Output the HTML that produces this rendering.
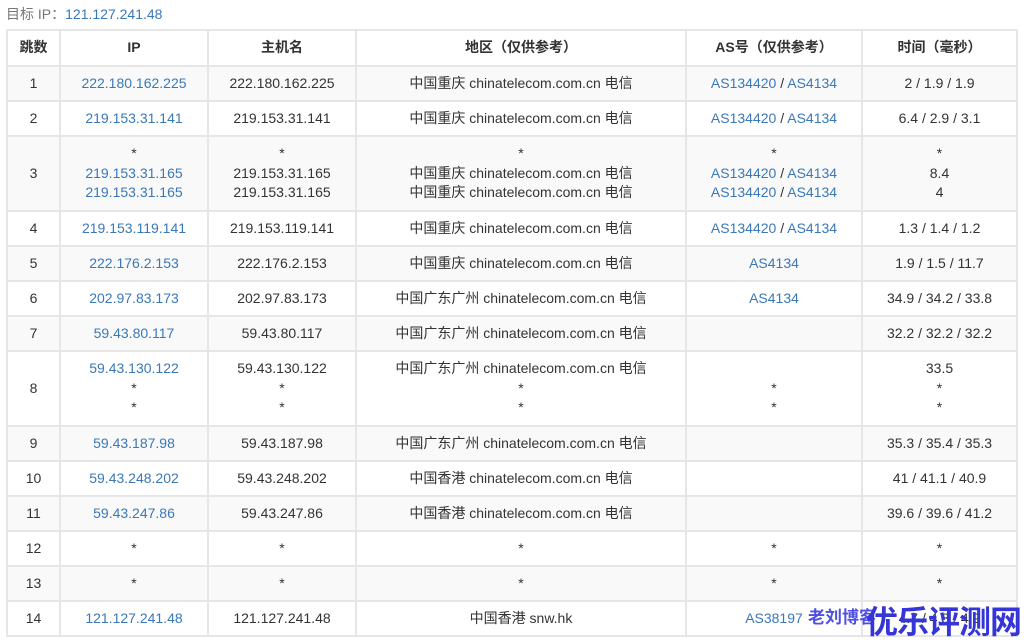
<!DOCTYPE html><html><head><meta charset="utf-8"><style>
body{margin:0;background:#fff;font-family:"Liberation Sans","Noto Sans CJK SC",sans-serif;font-size:14px;color:#333;}
.t{position:absolute;left:6px;top:4px;color:#777;font-size:14px}
.t a{color:#3a78b8}
table{position:absolute;left:6px;top:29px;border-collapse:collapse;table-layout:fixed;width:1010px}
td,th{border:2px solid #e6e6e6;text-align:center;vertical-align:middle;padding:0;line-height:19.5px}
th{font-weight:bold;height:34px}
tbody tr:nth-child(odd){background:#f9f9f9}
tr.s td{height:33px}
tr.m td{height:73px}
a{color:#3a78b8;text-decoration:none}
.wm1{position:absolute;left:808px;top:603px;color:#3c3ce0;font-weight:bold;font-size:17px;opacity:.9}
.wm2{position:absolute;left:866px;top:597px;color:#3535d8;font-weight:bold;font-size:32px;letter-spacing:-1px}
</style></head><body>
<div class="t">目标 IP：<a>121.127.241.48</a></div>
<table>
<colgroup><col style="width:53px"><col style="width:148px"><col style="width:148px"><col style="width:330px"><col style="width:176px"><col style="width:155px"></colgroup>
<thead><tr><th>跳数</th><th>IP</th><th>主机名</th><th>地区（仅供参考）</th><th>AS号（仅供参考）</th><th>时间（毫秒）</th></tr></thead>
<tbody>
<tr class="s"><td>1</td><td><a>222.180.162.225</a></td><td>222.180.162.225</td><td>中国重庆 chinatelecom.com.cn 电信</td><td><a>AS134420</a> / <a>AS4134</a></td><td>2 / 1.9 / 1.9</td></tr>
<tr class="s"><td>2</td><td><a>219.153.31.141</a></td><td>219.153.31.141</td><td>中国重庆 chinatelecom.com.cn 电信</td><td><a>AS134420</a> / <a>AS4134</a></td><td>6.4 / 2.9 / 3.1</td></tr>
<tr class="m"><td>3</td><td>*<br><a>219.153.31.165</a><br><a>219.153.31.165</a></td><td>*<br>219.153.31.165<br>219.153.31.165</td><td>*<br>中国重庆 chinatelecom.com.cn 电信<br>中国重庆 chinatelecom.com.cn 电信</td><td>*<br><a>AS134420</a> / <a>AS4134</a><br><a>AS134420</a> / <a>AS4134</a></td><td>*<br>8.4<br>4</td></tr>
<tr class="s"><td>4</td><td><a>219.153.119.141</a></td><td>219.153.119.141</td><td>中国重庆 chinatelecom.com.cn 电信</td><td><a>AS134420</a> / <a>AS4134</a></td><td>1.3 / 1.4 / 1.2</td></tr>
<tr class="s"><td>5</td><td><a>222.176.2.153</a></td><td>222.176.2.153</td><td>中国重庆 chinatelecom.com.cn 电信</td><td><a>AS4134</a></td><td>1.9 / 1.5 / 11.7</td></tr>
<tr class="s"><td>6</td><td><a>202.97.83.173</a></td><td>202.97.83.173</td><td>中国广东广州 chinatelecom.com.cn 电信</td><td><a>AS4134</a></td><td>34.9 / 34.2 / 33.8</td></tr>
<tr class="s"><td>7</td><td><a>59.43.80.117</a></td><td>59.43.80.117</td><td>中国广东广州 chinatelecom.com.cn 电信</td><td></td><td>32.2 / 32.2 / 32.2</td></tr>
<tr class="m"><td>8</td><td><a>59.43.130.122</a><br>*<br>*</td><td>59.43.130.122<br>*<br>*</td><td>中国广东广州 chinatelecom.com.cn 电信<br>*<br>*</td><td><br>*<br>*</td><td>33.5<br>*<br>*</td></tr>
<tr class="s"><td>9</td><td><a>59.43.187.98</a></td><td>59.43.187.98</td><td>中国广东广州 chinatelecom.com.cn 电信</td><td></td><td>35.3 / 35.4 / 35.3</td></tr>
<tr class="s"><td>10</td><td><a>59.43.248.202</a></td><td>59.43.248.202</td><td>中国香港 chinatelecom.com.cn 电信</td><td></td><td>41 / 41.1 / 40.9</td></tr>
<tr class="s"><td>11</td><td><a>59.43.247.86</a></td><td>59.43.247.86</td><td>中国香港 chinatelecom.com.cn 电信</td><td></td><td>39.6 / 39.6 / 41.2</td></tr>
<tr class="s"><td>12</td><td>*</td><td>*</td><td>*</td><td>*</td><td>*</td></tr>
<tr class="s"><td>13</td><td>*</td><td>*</td><td>*</td><td>*</td><td>*</td></tr>
<tr class="s"><td>14</td><td><a>121.127.241.48</a></td><td>121.127.241.48</td><td>中国香港 snw.hk</td><td><a>AS38197</a></td><td>4.7 / 4.8 / 4.9</td></tr>
</tbody></table>
<div class="wm1">老刘博客</div>
<div class="wm2">优乐评测网</div>
</body></html>
